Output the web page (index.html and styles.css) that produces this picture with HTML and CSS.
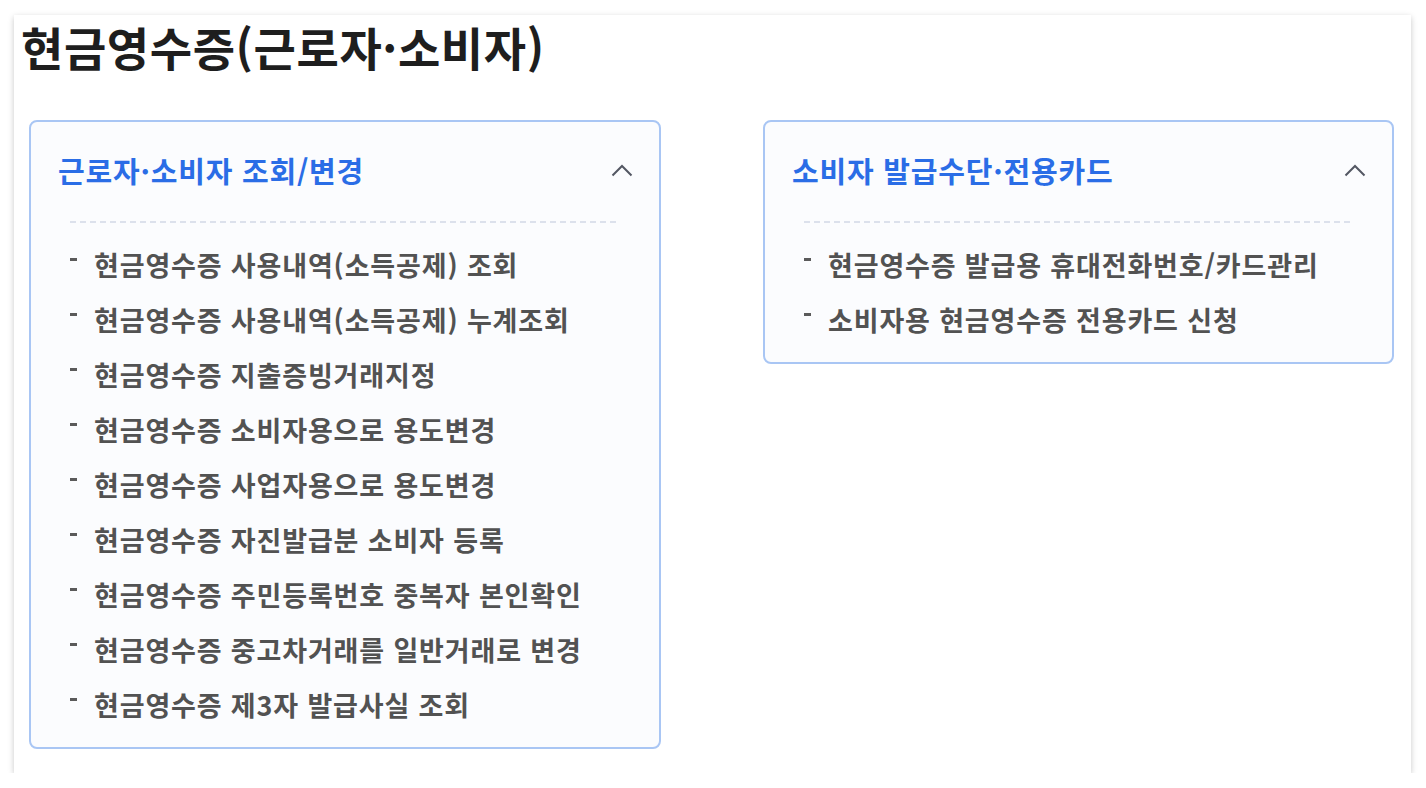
FILE: index.html
```html
<!DOCTYPE html>
<html lang="ko">
<head>
<meta charset="utf-8">
<title>현금영수증(근로자·소비자)</title>
<link rel="stylesheet" href="styles.css">
</head>
<body>
<div class="page">
  <h1 class="title">현금영수증(근로자·소비자)</h1>
  <div class="boxes">
    <section class="box">
      <div class="box-head">
        <h2 class="box-title">근로자·소비자 조회/변경</h2>
        <svg class="chev" width="22" height="13" viewBox="0 0 22 13"><path d="M1.5 11.5 L11 2 L20.5 11.5" fill="none" stroke="#535763" stroke-width="2"/></svg>
      </div>
      <div class="divider"></div>
      <ul class="list">
        <li>현금영수증 사용내역(소득공제) 조회</li>
        <li>현금영수증 사용내역(소득공제) 누계조회</li>
        <li>현금영수증 지출증빙거래지정</li>
        <li>현금영수증 소비자용으로 용도변경</li>
        <li>현금영수증 사업자용으로 용도변경</li>
        <li>현금영수증 자진발급분 소비자 등록</li>
        <li>현금영수증 주민등록번호 중복자 본인확인</li>
        <li>현금영수증 중고차거래를 일반거래로 변경</li>
        <li>현금영수증 제3자 발급사실 조회</li>
      </ul>
    </section>
    <section class="box">
      <div class="box-head">
        <h2 class="box-title">소비자 발급수단·전용카드</h2>
        <svg class="chev" width="22" height="13" viewBox="0 0 22 13"><path d="M1.5 11.5 L11 2 L20.5 11.5" fill="none" stroke="#535763" stroke-width="2"/></svg>
      </div>
      <div class="divider"></div>
      <ul class="list">
        <li>현금영수증 발급용 휴대전화번호/카드관리</li>
        <li>소비자용 현금영수증 전용카드 신청</li>
      </ul>
    </section>
  </div>
</div>
</body>
</html>
```
FILE: styles.css
```css
* { box-sizing: border-box; }
html, body { margin: 0; padding: 0; background: #ffffff; }
body {
  font-family: "Noto Sans CJK KR", "Noto Sans", sans-serif;
  color: #222;
}
.page {
  margin: 15px 15px 0 14px;
  width: 1397px;
  height: 758px;
  background: #fff;
  box-shadow: 0 2px 6px rgba(0,0,0,0.22);
  padding: 0 0 0 15px;
}
.title {
  margin: 0 0 0 -8px;
  padding-top: 3px;
  font-size: 46px;
  line-height: 56px;
  font-weight: 700;
  letter-spacing: 0.6px;
  color: #1e1e1e;
  height: 105px;
}
.boxes {
  display: grid;
  grid-template-columns: 632px 631px;
  column-gap: 102px;
  align-items: start;
}
.box {
  border: 2px solid #a9c6f4;
  border-radius: 8px;
  background: #fbfcfe;
  padding: 0 0 15px 0;
}
.box-head {
  display: flex;
  align-items: center;
  justify-content: space-between;
  padding: 28px 26px 0 27px;
  height: 68px;
}
.box-title {
  margin: 0;
  font-size: 29px;
  line-height: 40px;
  font-weight: 700;
  letter-spacing: 0.8px;
  color: #2a6de6;
}
.chev { display: block; margin-top: 0; }
.divider {
  margin: 31px 39px 0 39px;
  height: 1.5px;
  background: repeating-linear-gradient(to right, #dce1ec 0 6px, transparent 6px 10px);
}
.list {
  list-style: none;
  margin: 14px 0 0 0;
  padding: 0 0 0 39px;
}
.list li {
  position: relative;
  padding-left: 24px;
  font-size: 27px;
  line-height: 55px;
  font-weight: 700;
  letter-spacing: 0.85px;
  color: #525252;
}
.list li::before {
  content: "";
  position: absolute;
  left: 0;
  top: 21px;
  width: 7px;
  height: 3px;
  background: #5a5a5a;
}
```
